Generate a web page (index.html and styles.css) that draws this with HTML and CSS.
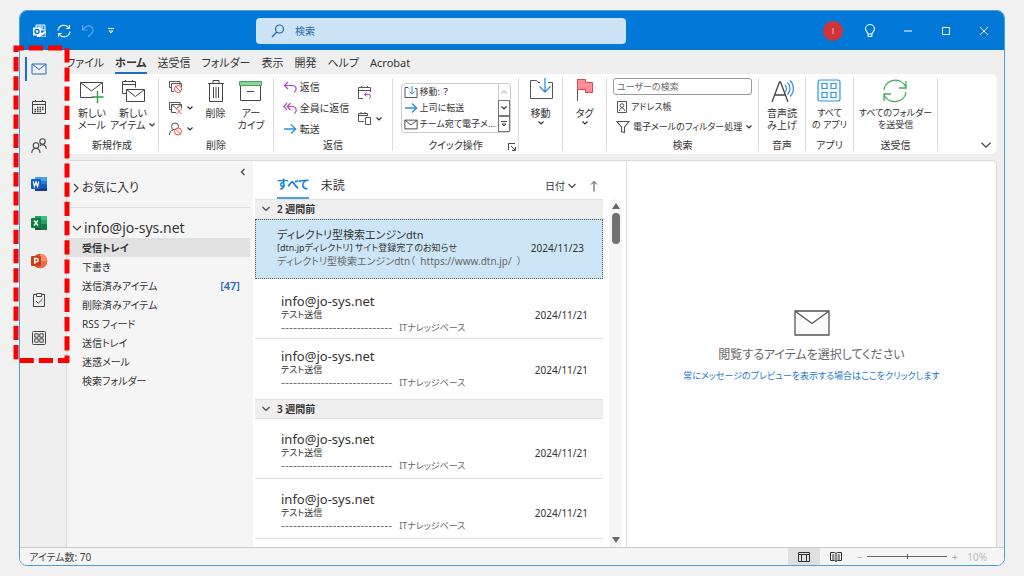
FILE: index.html
```html
<!DOCTYPE html>
<html lang="ja">
<head>
<meta charset="utf-8">
<title>受信トレイ</title>
<link rel="stylesheet" href="styles.css">
</head>
<body>
<svg class="symbols" aria-hidden="true">
  <symbol id="chev" viewBox="0 0 8 8"><path d="M1.5 2.5 4 5l2.500-2.500" fill="none" stroke="currentColor" stroke-width="1.200"/></symbol>
  <symbol id="mail" viewBox="0 0 16 12"><path d="M1 1h14v10H1zM1 1l7 5.500L15 1" fill="none" stroke="currentColor"/></symbol>
  <symbol id="arrow" viewBox="0 0 14 12"><path d="M1 6h12M8 1.500 12.700 6 8 10.500" fill="none" stroke="#2a8fd8" stroke-width="1.300"/></symbol>
</svg>
<div class="window">
  <header class="titlebar">
    <div class="quick">
      <svg class="app-logo" width="14" height="14" viewBox="0 0 14 14"><path d="M3 1h9v5H3z" fill="#2d8fe2" stroke="#fff"/><path d="M5 3h5M5 5h5" stroke="#fff"/><path d="M4 6l5 3 4-3v7H4z" fill="#fff"/><path d="M7 12.500 12.500 9v3.500z" fill="#2d8fe2"/><rect x="0" y="3.500" width="8" height="8" fill="#fff"/><circle cx="4" cy="7.500" r="2" fill="none" stroke="#0078d4" stroke-width="1.400"/></svg>
      <button aria-label="すべて送受信"><svg width="14" height="14" viewBox="0 0 14 14" fill="none" stroke="#fff" stroke-width="1.100"><path d="M1 6.500A6 6 0 0 1 12 4M12.500 1v3.500H9M13 7.500A6 6 0 0 1 2 10M1.500 13V9.500H5"/></svg></button>
      <button aria-label="元に戻す"><svg width="14" height="14" viewBox="0 0 14 14" fill="none" stroke="#5ba8e6" stroke-width="1.200"><path d="M1.500 1v5h5M1.500 6C4 3 7 1 10 2.500c3 1.800 2.500 5 .5 7L7 13"/></svg></button>
      <button aria-label="クイック アクセス" class="narrow"><svg width="8" height="8" viewBox="0 0 8 8" fill="none" stroke="#fff"><path d="M1 1.500h6M2 4l2 2 2-2z"/></svg></button>
    </div>
    <label class="search">
      <svg width="14" height="14" viewBox="0 0 14 14" fill="none" stroke="#1b68b0" stroke-width="1.200"><circle cx="8.500" cy="5" r="4"/><path d="M5.700 8 1 13"/></svg>
      <input type="text" placeholder="検索" aria-label="検索">
    </label>
    <div class="controls">
      <button class="avatar">I</button>
      <button aria-label="ヒント"><svg width="12" height="14" viewBox="0 0 12 14" fill="none" stroke="#fff" stroke-width="1.100"><path d="M4 10C4 8 1.500 7.500 1.500 5a4.500 4.500 0 0 1 9 0C10.500 7.500 8 8 8 10zM4.200 10v2.500h3.600V10"/></svg></button>
      <button aria-label="最小化"><svg width="10" height="10" viewBox="0 0 10 10"><path d="M1 5h8" stroke="#fff"/></svg></button>
      <button aria-label="最大化"><svg width="10" height="10" viewBox="0 0 10 10"><path d="M1.500 1.500h7v7h-7z" stroke="#fff" fill="none"/></svg></button>
      <button aria-label="閉じる"><svg width="10" height="10" viewBox="0 0 10 10"><path d="m1 1 8 8M9 1 1 9" stroke="#fff"/></svg></button>
    </div>
  </header>

  <div class="middle">
    <nav class="rail" aria-label="アプリ">
      <button class="current" aria-label="メール"><svg class="blue" width="16" height="12"><use href="#mail"/></svg></button>
      <button aria-label="予定表"><svg width="16" height="16" viewBox="0 0 16 16" fill="none" stroke="#444"><path d="M1.500 2.500h13v12h-13zM1.500 5.500h13M4.500 1v2M11.500 1v2"/><path d="M6 8.500h7M3.500 10.500H13M3.500 12.500H10" stroke-dasharray="1.500 1" stroke-width="1.400"/></svg></button>
      <button aria-label="連絡先"><svg width="16" height="16" viewBox="0 0 16 16" fill="none" stroke="#444" stroke-width="1.100"><circle cx="5" cy="7.500" r="2.800"/><path d="M.8 15c0-3 1.500-4.500 4.200-4.500S9 12 9 15"/><circle cx="11.500" cy="3.500" r="2.700"/><path d="M9 7.500c3-2 6-.5 6.300 3.300"/></svg></button>
      <button aria-label="Word"><svg width="17" height="16" viewBox="0 0 17 16"><path d="M4 1h12v4H4z" fill="#41a5ee"/><path d="M4 5h12v3H4z" fill="#2b7cd3"/><path d="M4 8h12v4H4z" fill="#185abd"/><path d="M4 12h12v3H4z" fill="#103f91"/><rect x="0" y="3" width="10" height="10" rx="1" fill="#185abd"/><path d="m2.200 5.500 1.300 5L5 6l1.500 4.500 1.300-5" fill="none" stroke="#fff" stroke-width="1.200"/></svg></button>
      <button aria-label="Excel"><svg width="17" height="16" viewBox="0 0 17 16"><path d="M4 1h6v7H4z" fill="#21a366"/><path d="M10 1h6v4h-6z" fill="#33c481"/><path d="M10 5h6v4h-6z" fill="#21a366"/><path d="M4 8h6v7H4z" fill="#185c37"/><path d="M10 9h6v6h-6z" fill="#107c41"/><rect x="0" y="3" width="10" height="10" rx="1" fill="#107c41"/><path d="m3 5.500 4 5M7 5.500l-4 5" stroke="#fff" stroke-width="1.300"/></svg></button>
      <button aria-label="PowerPoint"><svg width="17" height="16" viewBox="0 0 17 16"><circle cx="9" cy="8" r="7.300" fill="#d35230"/><path d="M9 .7A7.300 7.300 0 0 1 16.300 8H9z" fill="#ff8f6b"/><path d="M1.700 8h14.600A7.300 7.300 0 0 1 9 15.300" fill="#ed6c47"/><rect x="0" y="3" width="10" height="10" rx="1" fill="#c43e1c"/><path d="M3.700 11V5.500h1.800a1.600 1.600 0 0 1 0 3.300H3.700" fill="none" stroke="#fff" stroke-width="1.300"/></svg></button>
      <button aria-label="To Do"><svg width="16" height="16" viewBox="-1 0 16 16" fill="none" stroke="#444"><path d="M4.500 2.500h-3v12h11v-12h-3M4.500 1.500h5v3h-5zM4 9l2.200 2.300L10.500 7"/></svg></button>
      <button aria-label="その他のアプリ"><svg width="16" height="16" viewBox="0 0 16 16" fill="none" stroke="#444"><rect x="1.500" y="1.500" width="13" height="13" rx="1"/><path d="M3.800 3.800h3.400v3.400H3.800zM8.800 3.800h3.400v3.400H8.800zM3.800 8.800h3.400v3.400H3.800zM8.800 8.800h3.400v3.400H8.800z"/></svg></button>
    </nav>

    <div class="main">
      <div class="tabs" role="tablist">
        <button role="tab">ファイル</button>
        <button role="tab" class="active" aria-selected="true">ホーム</button>
        <button role="tab">送受信</button>
        <button role="tab">フォルダー</button>
        <button role="tab">表示</button>
        <button role="tab">開発</button>
        <button role="tab">ヘルプ</button>
        <button role="tab">Acrobat</button>
      </div>

      <div class="ribbon">
        <section class="group">
          <div class="tools create">
            <button class="big"><svg width="26" height="26" viewBox="0 0 26 26" fill="none" stroke="#444"><path d="M15 19.500H1.500v-15h22V15M1.500 4.500l11 8.500 11-8.500"/><path d="M18.500 13v12M12.500 19h12" stroke="#2ea043" stroke-width="1.400"/></svg>新しい<br>メール</button>
            <button class="big"><svg width="26" height="26" viewBox="0 0 26 26" fill="none" stroke="#444"><path d="M6 15.500H2.500v-12h13v6M2.500 6.500h13M5.500 2v2M12.500 2v2"/><path d="M6.500 11.500h18v12h-18zM6.500 11.500l9 7 9-7" fill="#fff"/></svg>新しい<br><span>アイテム <svg class="chev"><use href="#chev"/></svg></span></button>
          </div>
          <h2>新規作成</h2>
        </section>
        <section class="group">
          <div class="tools delete">
            <div class="stack">
              <button aria-label="無視"><svg width="15" height="14" viewBox="0 0 15 14" fill="none" stroke="#555"><path d="M12 5V1.500H1.500v6H3M3.500 3.500h10v4M3.500 3.500v8H6"/><circle cx="10" cy="9" r="3.500" stroke="#f04a4a" fill="#fff"/><path d="m7.500 6.500 5 5" stroke="#f04a4a"/></svg></button>
              <button aria-label="クリーンアップ"><svg width="15" height="14" viewBox="0 0 15 14" fill="none" stroke="#555"><path d="M12 3V1.500H1.500v7H3M3.500 3.500h10v4M3.500 3.500v8H8M3.500 3.500l5 4 5-4"/><path d="m8.500 8 5 5m0-5-5 5" stroke="#f04a4a"/></svg><svg class="chev"><use href="#chev"/></svg></button>
              <button aria-label="迷惑メール"><svg width="15" height="14" viewBox="0 0 15 14" fill="none" stroke="#555"><circle cx="7" cy="4.500" r="3.500"/><path d="M1.500 13c0-3 1.200-4.500 3.500-5"/><circle cx="10" cy="9.500" r="3.500" stroke="#f04a4a" fill="#fff"/><path d="m7.500 7 5 5" stroke="#f04a4a"/></svg><svg class="chev"><use href="#chev"/></svg></button>
            </div>
            <button class="big"><svg width="20" height="26" viewBox="0 0 20 26" fill="none" stroke="#444"><path d="M2 5.500h16M7 5V2.500h6V5M3.500 6v17.500h13V6M7.500 9v11M10 9v11M12.500 9v11"/></svg>削除</button>
            <button class="big"><svg width="26" height="26" viewBox="0 0 26 26" fill="none" stroke="#444"><path d="M2.500 8v14.500h20V8M9 13.500h7"/><path d="M1.500 3.500h22v4h-22z" fill="#8bd39b" stroke="#3fa657"/></svg>アー<br>カイブ</button>
          </div>
          <h2>削除</h2>
        </section>
        <section class="group">
          <div class="tools reply">
            <div class="stack">
              <button><svg width="14" height="12" viewBox="0 0 14 12" fill="none" stroke="#b146c2" stroke-width="1.200"><path d="M5 1 1.500 4.500 5 8M1.500 4.500H9c5 0 5 5 2 7"/></svg>返信</button>
              <button><svg width="14" height="12" viewBox="0 0 14 12" fill="none" stroke="#b146c2" stroke-width="1.200"><path d="M4 1 .8 4.500 4 8M7.500 1 4.300 4.500 7.500 8M4.300 4.500H9c5 0 5 5 2.500 7"/></svg>全員に返信</button>
              <button><svg width="14" height="12"><use href="#arrow"/></svg>転送</button>
            </div>
            <div class="stack two">
              <button aria-label="会議"><svg width="15" height="15" viewBox="0 0 15 15" fill="none" stroke="#555"><path d="M6 13.500H1.500v-11h12V7M1.500 5.500h12M4.500 1v2M10.500 1v2"/><path d="M9.500 7.500 7.500 9.500l2 2M7.500 9.500H12c2 0 2 3 0 4" stroke="#b146c2"/></svg></button>
              <button aria-label="その他"><svg width="15" height="15" viewBox="0 0 15 15" fill="none" stroke="#555"><path d="M7 10.500H1.500v-8h9V5M1.500 4.500h9M4 1v2M8 1v2M8.500 6.500h5v7h-5z"/></svg><svg class="chev"><use href="#chev"/></svg></button>
            </div>
          </div>
          <h2>返信</h2>
        </section>
        <section class="group">
          <div class="tools">
            <div class="gallery">
              <ul>
                <li><button><svg width="14" height="13" viewBox="0 0 14 13" fill="none" stroke="#555"><path d="M5 2.500 4 1.500H1v10h12v-9h-2"/><path d="M8 0v8M5.500 5.500 8 8l2.500-2.500" stroke="#2a8fd8"/></svg>移動: ？</button></li>
                <li><button><svg width="14" height="12"><use href="#arrow"/></svg>上司に転送</button></li>
                <li><button><svg width="14" height="11"><use href="#mail"/></svg>チーム宛て電子メ…</button></li>
              </ul>
              <div class="spin">
                <button aria-label="前へ" disabled><svg class="chev flip"><use href="#chev"/></svg></button>
                <button aria-label="次へ"><svg class="chev"><use href="#chev"/></svg></button>
                <button aria-label="詳細"><svg width="8" height="8" viewBox="0 0 8 8" fill="none" stroke="#444"><path d="M1 1.500h6M2 4l2 2 2-2z"/></svg></button>
              </div>
            </div>
          </div>
          <h2>クイック操作</h2>
          <button class="launcher" aria-label="クイック操作の管理"><svg width="8" height="8" viewBox="0 0 8 8" fill="none" stroke="#444"><path d="M.5 7V.5H7M3 3l4 4M7.500 4v3.500H4"/></svg></button>
        </section>
        <section class="group">
          <div class="tools">
            <button class="big"><svg width="26" height="26" viewBox="0 0 26 26" fill="none" stroke="#555"><path d="M12 4.500h-2L8.500 2.500h-6v18h22v-16H20"/><path d="M17 0v13M11.500 8.500 17 14l5.500-5.500" stroke="#2a8fd8" stroke-width="1.300"/></svg>移動<svg class="chev"><use href="#chev"/></svg></button>
          </div>
        </section>
        <section class="group">
          <div class="tools">
            <button class="big"><svg width="20" height="26" viewBox="0 0 20 26"><path d="M2.500 1v22" stroke="#555"/><path d="M2.500 1.500h8v3h7v10h-7v-3h-8z" fill="#ff8f95" stroke="#e8434c"/></svg>タグ<svg class="chev"><use href="#chev"/></svg></button>
          </div>
        </section>
        <section class="group">
          <div class="find">
            <input type="text" placeholder="ユーザーの検索" aria-label="ユーザーの検索">
            <button><svg width="12" height="14" viewBox="0 0 12 14" fill="none" stroke="#555"><path d="M1.500 1.500h9v11h-9zM3.500 11c0-4 5-4 5 0"/><circle cx="6" cy="5.500" r="1.800"/></svg>アドレス帳</button>
            <button><svg width="14" height="14" viewBox="0 0 14 14" fill="none" stroke="#555" stroke-width="1.100"><path d="M1 1.500h12L8.500 7v5.500l-3-1V7z"/></svg>電子メールのフィルター処理<svg class="chev"><use href="#chev"/></svg></button>
          </div>
          <h2>検索</h2>
        </section>
        <section class="group">
          <div class="tools">
            <button class="big"><svg width="26" height="26" viewBox="0 0 26 26" fill="none"><path d="M3 24 10.500 4h1L19 24M5.800 17h10.500" stroke="#444" stroke-width="1.300"/><path d="M16 7c1.800 2 1.800 5 0 7M18.500 4.500c3.300 3.500 3.300 8.500 0 12M21 2.500c4.500 4.500 4.500 11.500 0 16" stroke="#2a8fd8" stroke-width="1.200"/></svg>音声読<br>み上げ</button>
          </div>
          <h2>音声</h2>
        </section>
        <section class="group">
          <div class="tools">
            <button class="big small"><svg width="26" height="26" viewBox="0 0 26 26" fill="none" stroke="#3a96dd" stroke-width="1.200"><rect x="2" y="2" width="22" height="21" rx="2" fill="#eef6fc"/><path d="M6 5.500h5v5H6zM15 5.500h5v5h-5zM6 14.500h5v5H6zM15 14.500h5v5h-5z" fill="#fff"/></svg>すべて<br>の アプリ</button>
          </div>
          <h2>アプリ</h2>
        </section>
        <section class="group">
          <div class="tools">
            <button class="big small"><svg width="26" height="26" viewBox="0 0 26 26" fill="none" stroke="#3faa5a" stroke-width="1.300"><path d="M2 12C3 1 19-2 24 9.500M24 3v7h-7M24 14c-1 11-17 13-22 3M2 23v-7h7"/></svg>すべてのフォルダー<br>を送受信</button>
          </div>
          <h2>送受信</h2>
        </section>
        <button class="collapse" aria-label="リボンを折りたたむ"><svg width="12" height="12" viewBox="0 0 8 8"><path d="M1 2.500l3 3 3-3" fill="none" stroke="#444" stroke-width=".8"/></svg></button>
      </div>

      <div class="panes">
        <nav class="folders" aria-label="フォルダー">
          <button class="fold" aria-label="折りたたむ"><svg width="8" height="10" viewBox="0 0 8 10"><path d="M5.500 2 2.500 5l3 3" fill="none" stroke="#444" stroke-width="1.300"/></svg></button>
          <button class="tree fav"><svg width="8" height="10" viewBox="0 0 8 10"><path d="m2 1 4 4-4 4" fill="none" stroke="#444" stroke-width="1.200"/></svg>お気に入り</button>
          <button class="tree"><svg width="10" height="8" viewBox="0 0 10 8"><path d="m1 2 4 4 4-4" fill="none" stroke="#444" stroke-width="1.200"/></svg>info@jo-sys.net</button>
          <ul>
            <li class="selected"><a href="#">受信トレイ</a></li>
            <li><a href="#">下書き</a></li>
            <li><a href="#">送信済みアイテム<b>[47]</b></a></li>
            <li><a href="#">削除済みアイテム</a></li>
            <li><a href="#">RSS フィード</a></li>
            <li><a href="#">送信トレイ</a></li>
            <li><a href="#">迷惑メール</a></li>
            <li><a href="#">検索フォルダー</a></li>
          </ul>
        </nav>

        <section class="messages">
          <div class="list">
            <div class="filter">
              <button class="on">すべて</button>
              <button>未読</button>
              <button class="sort">日付 <svg width="10" height="8" viewBox="0 0 10 8"><path d="m1.500 2 3.500 3.500L8.500 2" fill="none" stroke="#444" stroke-width="1.200"/></svg></button>
              <button class="order" aria-label="昇順"><svg width="10" height="12" viewBox="0 0 10 12"><path d="M5 11.500v-10M2 4.500l3-3 3 3" fill="none" stroke="#444"/></svg></button>
            </div>
            <button class="period"><svg width="10" height="8" viewBox="0 0 10 8"><path d="m1.500 2 3.500 3.500L8.500 2" fill="none" stroke="#444" stroke-width="1.200"/></svg>2 週間前</button>
            <article class="item selected"><h3>ディレクトリ型検索エンジンdtn</h3><p class="subject">[dtn.jpディレクトリ] サイト登録完了のお知らせ<time>2024/11/23</time></p><p class="preview">ディレクトリ型検索エンジンdtn（&nbsp; https://www.dtn.jp/ &nbsp;）</p></article>
            <article class="item low"><h3>info@jo-sys.net</h3><p class="subject">テスト送信<time>2024/11/21</time></p><p class="preview"><span class="rule">----------------------------</span>ITナレッジベース</p></article>
            <article class="item high"><h3>info@jo-sys.net</h3><p class="subject">テスト送信<time>2024/11/21</time></p><p class="preview"><span class="rule">----------------------------</span>ITナレッジベース</p></article>
            <button class="period"><svg width="10" height="8" viewBox="0 0 10 8"><path d="m1.500 2 3.500 3.500L8.500 2" fill="none" stroke="#444" stroke-width="1.200"/></svg>3 週間前</button>
            <article class="item"><h3>info@jo-sys.net</h3><p class="subject">テスト送信<time>2024/11/21</time></p><p class="preview"><span class="rule">----------------------------</span>ITナレッジベース</p></article>
            <article class="item"><h3>info@jo-sys.net</h3><p class="subject">テスト送信<time>2024/11/21</time></p><p class="preview"><span class="rule">----------------------------</span>ITナレッジベース</p></article>
          </div>
          <div class="scroll" aria-hidden="true">
            <svg width="8" height="6" viewBox="0 0 8 6"><path d="M4 0 8 6H0z" fill="#666"/></svg>
            <i></i>
            <svg class="end" width="8" height="6" viewBox="0 0 8 6"><path d="M4 6 0 0h8z" fill="#666"/></svg>
          </div>
        </section>

        <section class="reading">
          <svg width="36" height="26" viewBox="0 0 36 26"><path d="M1 1h34v24H1zM1 1l17 12.500L35 1" fill="#fafafa" stroke="#555" stroke-width="1.300"/></svg>
          <p>閲覧するアイテムを選択してください</p>
          <a href="#">常にメッセージのプレビューを表示する場合はここをクリックします</a>
        </section>
      </div>
    </div>
  </div>

  <footer class="status">
    <span class="count">アイテム数: 70</span>
    <button class="pressed" aria-label="標準"><svg width="12" height="10" viewBox="0 0 12 10" fill="none" stroke="#333"><path d="M.5.5h11v9H.5zM.5 2.500h11M3.500 2.500v7M8.500 2.500v7"/></svg></button>
    <button aria-label="閲覧"><svg width="12" height="12" viewBox="0 0 12 12" fill="none" stroke="#333"><path d="M.5 1.500h4L6 2.500l1.500-1h4v8h-4l-1.500 1-1.500-1h-4zM6 2.500v8M2 4h2.500M2 6h2.500M2 8h2.500M7.500 4H10M7.500 6H10M7.500 8H10"/></svg></button>
    <button class="step" aria-label="縮小">−</button>
    <input type="range" min="0" max="100" value="50" aria-label="ズーム">
    <button class="step" aria-label="拡大">+</button>
    <span class="zoom">10%</span>
  </footer>

  <svg class="highlight" width="60" height="320" viewBox="0 0 60 320" aria-hidden="true"><path d="M3 3h51v312.600H3z" fill="none" stroke="#fa0000" stroke-width="5" stroke-dasharray="14.200 5" stroke-dashoffset="6.400"/></svg>
</div>
</body>
</html>
```
FILE: styles.css
```css
* { box-sizing: border-box; }
body {
  margin: 0;
  padding: 10px 19px;
  background: #f1f1f1;
  color: #333;
  font: 10px/12px "Noto Sans", "Noto Sans CJK JP", sans-serif;
  font-feature-settings: "palt";
}
button, input { font: inherit; font-feature-settings: inherit; color: inherit; }
button { border: 0; padding: 0; background: none; }
svg { flex: none; display: block; }
h2, h3, p, ul { margin: 0; padding: 0; font-weight: 400; list-style: none; }
a { text-decoration: none; color: inherit; }
.symbols { position: absolute; width: 0; height: 0; }
.chev { width: 8px; height: 8px; display: inline-block; color: #333; }
.flip { transform: rotate(180deg); color: #bbb; }

.window {
  position: relative;
  display: flex;
  flex-direction: column;
  height: calc(100vh - 20px);
  min-height: 540px;
  border: 1px solid #4a9fe0;
  border-radius: 8px;
  background: #efefef;
}

.titlebar {
  display: flex;
  align-items: center;
  height: 39px;
  background: #0078d7;
  border-radius: 7px 7px 0 0;
}
.quick { display: flex; align-items: center; gap: 10px; width: 236px; padding-left: 13px; }
.narrow { padding-left: 2px; }
.search {
  flex: 0 1 370px;
  display: flex;
  align-items: center;
  gap: 10px;
  height: 26px;
  padding-left: 15px;
  background: #cde4f7;
  border-radius: 4px;
}
.search input { flex: 1; min-width: 0; border: 0; outline: 0; background: none; padding: 0; }
.search input::placeholder { color: #1b68b0; opacity: 1; }
.controls { display: flex; align-items: center; margin-left: auto; padding-right: 1px; }
.controls button { width: 38px; display: flex; justify-content: center; }
.controls .avatar {
  width: 20px;
  height: 20px;
  margin-right: 8px;
  align-items: center;
  border-radius: 50%;
  background: #d13438;
  color: #f3c4c5;
  font-family: "Liberation Sans", sans-serif;
  font-size: 9px;
}

.middle { flex: 1; display: flex; min-height: 0; }
.rail { width: 46px; height: 300px; display: flex; flex-direction: column; justify-content: space-between; padding-top: 7px; }
.rail button { height: 24px; margin-left: 5px; padding-left: 4px; border-left: 2px solid transparent; display: flex; align-items: center; }
.rail .current { border-color: #1b6ec2; }
.blue { color: #1b6ec2; }
.main { flex: 1; min-width: 0; display: flex; flex-direction: column; padding-right: 7px; }

.tabs { display: flex; gap: 11px; height: 24px; padding-top: 3px; font-size: 11px; line-height: 18px; }
.tabs button { white-space: nowrap; height: 21px; border-bottom: 2px solid transparent; }
.tabs .active { font-weight: 700; border-color: #1b6ec2; }

.ribbon {
  display: grid;
  grid-template-columns: 93px 115px 119px 126px 44px 44px 152px 47px 48px 84px 1fr;
  padding: 4px 0 3px;
  height: 80px;
  background: #fff;
  border-radius: 0 6px 6px 0;
}
.group {
  position: relative;
  display: flex;
  flex-direction: column;
  border-right: 1px solid #dcdcdc;
}
.group h2 { font-size: 10px; line-height: 12px; text-align: center; white-space: nowrap; }
.tools { flex: 1; display: flex; justify-content: center; gap: 8px; white-space: nowrap; }
.create { gap: 4px; padding-left: 10px; }
.delete { gap: 12px; }
.big { display: flex; flex-direction: column; align-items: center; text-align: center; line-height: 12px; flex: none; }
.small { font-size: 9px; }
.big > svg:first-child { margin-bottom: 3px; }
.stack { display: flex; flex-direction: column; gap: 8px; padding-top: 2px; }
.stack button { display: flex; align-items: center; gap: 3px; height: 13px; white-space: nowrap; }
.two { gap: 13px; padding-top: 8px; }
.reply { gap: 8px; }
.gallery { display: flex; width: 110px; height: 50px; margin-top: 5px; border: 1px solid #ccc; border-radius: 4px; }
.gallery ul { flex: 1; min-width: 0; }
.gallery li button { display: flex; align-items: center; gap: 2px; height: 16px; padding-left: 2px; font-size: 9px; white-space: nowrap; }
.spin { display: grid; width: 12px; }
.spin button { display: flex; align-items: center; justify-content: center; border: 1px solid #777; }
.spin button:disabled { border-color: transparent transparent transparent #ccc; }
.launcher { position: absolute; right: 2px; bottom: 0; }
.find { flex: 1; display: flex; flex-direction: column; gap: 4px; padding: 0 6px; }
.find input { height: 17px; width: 100%; padding: 0 3px; border: 1px solid #999; border-radius: 3px; }
.find input, .find button { font-size: 9px; }
.find input::placeholder { color: #666; opacity: 1; }
.find button { display: flex; align-items: center; gap: 3px; height: 16px; padding-left: 3px; white-space: nowrap; }
.collapse { justify-self: end; align-self: end; padding-right: 5px; }

.panes {
  flex: 1;
  min-height: 0;
  display: grid;
  grid-template-columns: 186px 374px 1fr;
  margin-top: 6px;
  background: #fff;
  border: 1px solid #d9d9d9;
  border-width: 1px 1px 0 1px;
  border-radius: 5px 5px 0 0;
}
.folders { background: #f5f5f5; padding-right: 3px; border-radius: 5px 0 0 0; }
.fold { display: block; margin: 6px 3px 1px auto; }
.tree { display: flex; align-items: center; gap: 2px; width: 100%; height: 20px; padding-left: 5px; font-size: 14px; white-space: nowrap; }
.tree.fav { height: 30px; margin-bottom: 10px; padding-bottom: 9px; border-bottom: 1px solid #ddd; font-size: 12px; }
.folders li a { display: flex; height: 19px; align-items: center; padding: 0 10px 0 15px; }
.folders .selected { background: #e1e1e1; font-weight: 700; }
.folders b { margin-left: auto; font-size: 11px; font-weight: 600; color: #2b70b8; }

.messages { display: flex; border-right: 1px solid #ddd; padding-left: 2px; min-height: 0; }
.list { flex: 1; min-width: 0; overflow: hidden; }
.filter { display: flex; height: 38px; padding: 0 4px 0 22px; gap: 12px; font-size: 12px; align-items: stretch; }
.filter button { padding-top: 12px; white-space: nowrap; }
.filter .on { color: #1b7fd0; font-weight: 700; border-bottom: 2px solid #4a9fe0; }
.filter .sort { display: flex; align-items: center; gap: 2px; margin-left: auto; font-size: 10px; }
.filter .order { display: flex; align-items: center; }
.period { display: flex; align-items: center; gap: 6px; width: 100%; height: 20px; padding-left: 6px; background: #efefef; border-top: 1px solid #e2e2e2; border-bottom: 1px solid #e2e2e2; font-weight: 600; }
.item { height: 60px; padding: 13px 15px 0 26px; border-bottom: 1px solid #e2e2e2; white-space: nowrap; }
.item.low { padding-top: 15px; }
.item.high { padding-top: 10px; border-bottom-color: transparent; }
.item.selected { padding: 8px 18px 0 21px; background: #cde6f7; border: 1px dotted #555; }
.item h3 { margin-bottom: 1px; font-size: 13px; line-height: 14px; }
.item.selected h3 { margin: 0; font-size: 11px; }
.subject { display: flex; justify-content: space-between; font-size: 9px; line-height: 12px; }
.subject time { font-size: 10px; }
.preview { font-size: 9px; line-height: 14px; color: #666; }
.selected .preview { font-size: 10px; }
.rule { font: 11px/12px "DejaVu Sans", sans-serif; margin-right: 7px; }
.scroll { display: flex; flex-direction: column; align-items: center; width: 13px; margin: 38px 4px 0 6px; padding: 4px 0; background: #f5f5f5; border-radius: 6px 6px 0 0; }
.scroll i { width: 8px; height: 31px; margin-top: 4px; border-radius: 4px; background: #707070; }
.scroll .end { margin-top: auto; }

.reading { display: flex; flex-direction: column; align-items: center; justify-content: center; padding-bottom: 16px; white-space: nowrap; }
.reading p { margin: 10px 0 5px; font-size: 12px; line-height: 18px; color: #666; }
.reading a { color: #1a78cc; font-size: 9px; line-height: 14px; }

.status { display: flex; align-items: center; height: 18px; padding: 0 17px 0 9px; background: #f5f5f5; border-top: 1px solid #ccc; border-radius: 0 0 7px 7px; color: #444; }
.count { margin-right: auto; }
.status button { display: flex; align-items: center; justify-content: center; width: 32px; height: 17px; }
.status .pressed { background: #e0e0e0; }
.status .step { width: 15px; color: #aaa; }
.status input { appearance: none; width: 80px; height: 9px; margin: 0; background: linear-gradient(#666, #666) center / 100% 1px no-repeat; }
.status input::-webkit-slider-thumb { appearance: none; width: 1px; height: 5px; background: #555; }
.zoom { margin-left: 5px; color: #bbb; }

.highlight { position: absolute; left: -7px; top: 34px; pointer-events: none; }
```
